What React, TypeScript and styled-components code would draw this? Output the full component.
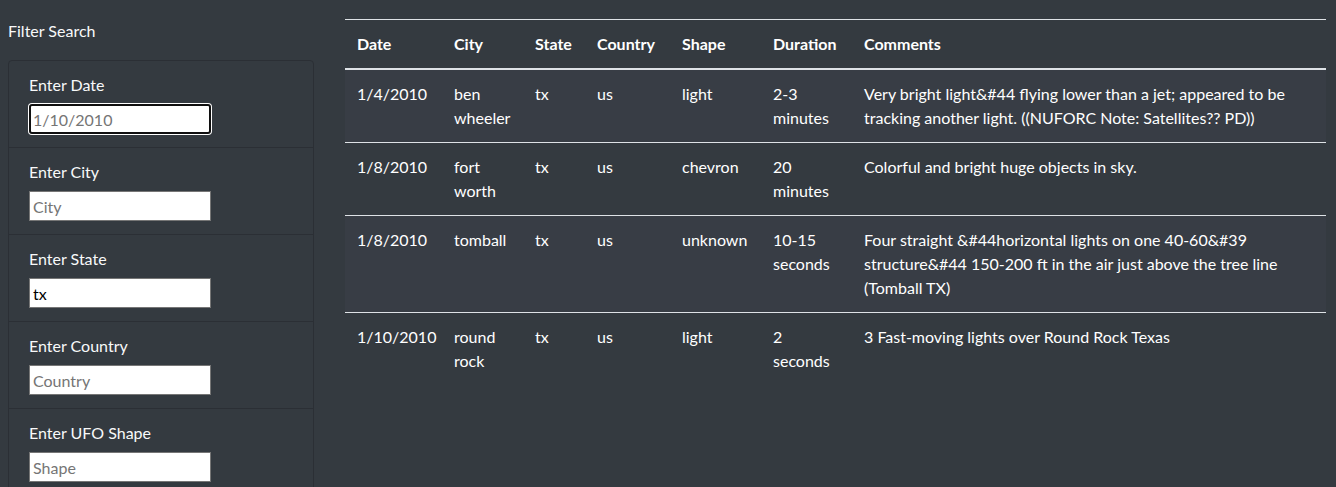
import React from "react";
import styled, { createGlobalStyle } from "styled-components";

const Global = createGlobalStyle`
  html, body { margin: 0; padding: 0; background: #343a40; }
  body {
    font-family: Lato, "Noto Sans", sans-serif;
    font-size: 16px;
    line-height: 24px;
    color: #fff;
  }
  * { box-sizing: border-box; }
`;

const Page = styled.div`
  display: flex;
  align-items: flex-start;
  gap: 31px;
  padding: 0 10px 0 8px;
  min-height: 487px;
  background: #343a40;
`;

const Sidebar = styled.aside`
  width: 306px;
  flex: none;
  padding-top: 19px;
`;

const SideTitle = styled.div`
  line-height: 24px;
  margin-bottom: 17px;
  color: #f8f9fa;
`;

const ListGroup = styled.ul`
  list-style: none;
  margin: 0;
  padding: 0;
  border: 1px solid #2b2f35;
  border-radius: 4px;
`;

const ListItem = styled.li`
  padding: 12px 20px 13px;
  &:not(:first-child) { border-top: 1px solid #2b2f35; }
`;

const Label = styled.label`
  display: block;
  line-height: 24px;
  margin-bottom: 7px;
  color: #f8f9fa;
`;

const Input = styled.input<{ $focused?: boolean }>`
  display: block;
  width: 182px;
  height: 30px;
  padding: 1px 3px;
  font-family: inherit;
  font-size: 16px;
  color: #000;
  background: #fff;
  border: 1px solid #767676;
  border-radius: 0;
  outline: none;
  ${(p) =>
    p.$focused &&
    `
    border: 2px solid #101010;
    border-radius: 3px;
    box-shadow: 0 0 0 1px #fff;
    padding: 0 2px;
  `}
  &::placeholder { color: #757575; }
`;

const Main = styled.main`
  flex: 1;
  padding-top: 19px;
`;

const Table = styled.table`
  width: 981px;
  border-collapse: collapse;
  table-layout: fixed;
  color: #fff;
`;

const Th = styled.th<{ $w: number }>`
  width: ${(p) => p.$w}px;
  text-align: left;
  font-weight: 700;
  padding: 12px;
  line-height: 24px;
  border-top: 1px solid #dee2e6;
  border-bottom: 2px solid #dee2e6;
  vertical-align: bottom;
`;

const Row = styled.tr<{ $striped: boolean }>`
  background: ${(p) => (p.$striped ? "#383d45" : "transparent")};
`;

const Td = styled.td`
  padding: 12px;
  line-height: 24px;
  vertical-align: top;
  border-top: 1px solid #dee2e6;
`;

const columns: [string, number][] = [
  ["Date", 97],
  ["City", 81],
  ["State", 62],
  ["Country", 85],
  ["Shape", 91],
  ["Duration", 91],
  ["Comments", 474],
];

const rows = [
  ["1/4/2010", "ben wheeler", "tx", "us", "light", "2-3 minutes", "Very bright light&#44 flying lower than a jet; appeared to be tracking another light. ((NUFORC Note: Satellites?? PD))"],
  ["1/8/2010", "fort worth", "tx", "us", "chevron", "20 minutes", "Colorful and bright huge objects in sky."],
  ["1/8/2010", "tomball", "tx", "us", "unknown", "10-15 seconds", "Four straight &#44horizontal lights on one 40-60&#39 structure&#44 150-200 ft in the air just above the tree line (Tomball TX)"],
  ["1/10/2010", "round rock", "tx", "us", "light", "2 seconds", "3 Fast-moving lights over Round Rock Texas"],
];

const filters = [
  { label: "Enter Date", placeholder: "1/10/2010", value: "", focused: true },
  { label: "Enter City", placeholder: "City", value: "" },
  { label: "Enter State", placeholder: "State", value: "tx" },
  { label: "Enter Country", placeholder: "Country", value: "" },
  { label: "Enter UFO Shape", placeholder: "Shape", value: "" },
];

export default function App() {
  return (
    <>
      <Global />
      <Page>
        <Sidebar>
          <SideTitle>Filter Search</SideTitle>
          <ListGroup>
            {filters.map((f) => (
              <ListItem key={f.label}>
                <Label>{f.label}</Label>
                <Input
                  $focused={f.focused}
                  placeholder={f.placeholder}
                  defaultValue={f.value}
                  readOnly
                />
              </ListItem>
            ))}
          </ListGroup>
        </Sidebar>
        <Main>
          <Table>
            <thead>
              <tr>
                {columns.map(([c, w]) => (
                  <Th key={c} $w={w}>{c}</Th>
                ))}
              </tr>
            </thead>
            <tbody>
              {rows.map((r, i) => (
                <Row key={i} $striped={i % 2 === 0}>
                  {r.map((c, j) => (
                    <Td key={j}>{c}</Td>
                  ))}
                </Row>
              ))}
            </tbody>
          </Table>
        </Main>
      </Page>
    </>
  );
}
